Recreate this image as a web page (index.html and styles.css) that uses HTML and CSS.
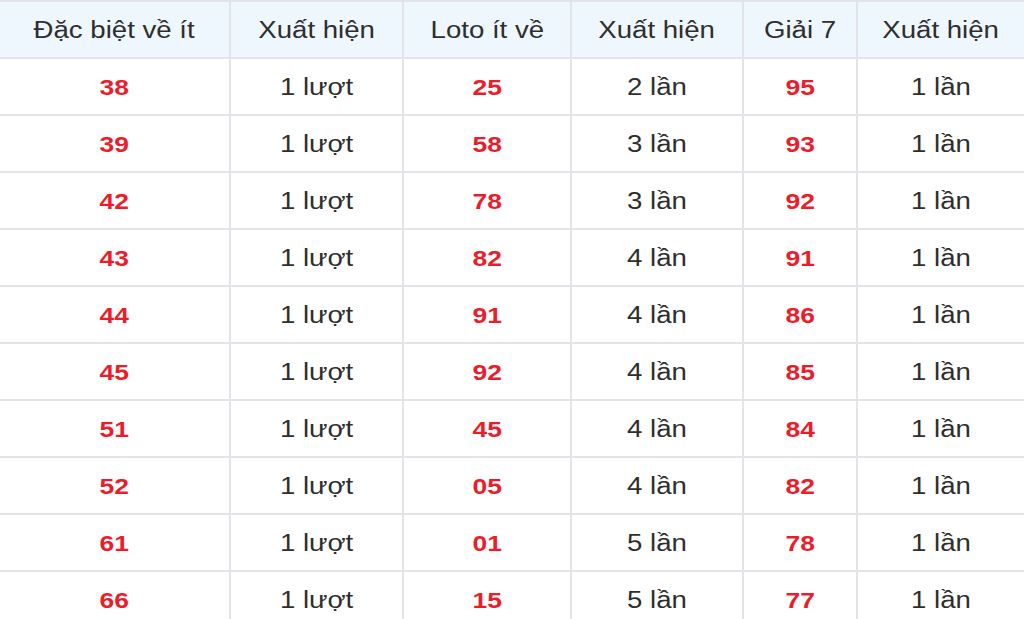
FILE: index.html
```html
<!DOCTYPE html>
<html lang="vi">
<head>
<meta charset="utf-8">
<link rel="stylesheet" href="styles.css">
</head>
<body>
<table class="stats">
  <colgroup>
    <col class="c1"><col class="c2"><col class="c3"><col class="c4"><col class="c5"><col class="c6">
  </colgroup>
  <thead>
    <tr>
      <th><span>Đặc biệt về ít</span></th>
      <th><span>Xuất hiện</span></th>
      <th><span>Loto ít về</span></th>
      <th><span>Xuất hiện</span></th>
      <th><span>Giải 7</span></th>
      <th><span>Xuất hiện</span></th>
    </tr>
  </thead>
  <tbody>
    <tr><td class="num"><span>38</span></td><td><span>1 lượt</span></td><td class="num"><span>25</span></td><td><span>2 lần</span></td><td class="num"><span>95</span></td><td><span>1 lần</span></td></tr>
    <tr><td class="num"><span>39</span></td><td><span>1 lượt</span></td><td class="num"><span>58</span></td><td><span>3 lần</span></td><td class="num"><span>93</span></td><td><span>1 lần</span></td></tr>
    <tr><td class="num"><span>42</span></td><td><span>1 lượt</span></td><td class="num"><span>78</span></td><td><span>3 lần</span></td><td class="num"><span>92</span></td><td><span>1 lần</span></td></tr>
    <tr><td class="num"><span>43</span></td><td><span>1 lượt</span></td><td class="num"><span>82</span></td><td><span>4 lần</span></td><td class="num"><span>91</span></td><td><span>1 lần</span></td></tr>
    <tr><td class="num"><span>44</span></td><td><span>1 lượt</span></td><td class="num"><span>91</span></td><td><span>4 lần</span></td><td class="num"><span>86</span></td><td><span>1 lần</span></td></tr>
    <tr><td class="num"><span>45</span></td><td><span>1 lượt</span></td><td class="num"><span>92</span></td><td><span>4 lần</span></td><td class="num"><span>85</span></td><td><span>1 lần</span></td></tr>
    <tr><td class="num"><span>51</span></td><td><span>1 lượt</span></td><td class="num"><span>45</span></td><td><span>4 lần</span></td><td class="num"><span>84</span></td><td><span>1 lần</span></td></tr>
    <tr><td class="num"><span>52</span></td><td><span>1 lượt</span></td><td class="num"><span>05</span></td><td><span>4 lần</span></td><td class="num"><span>82</span></td><td><span>1 lần</span></td></tr>
    <tr><td class="num"><span>61</span></td><td><span>1 lượt</span></td><td class="num"><span>01</span></td><td><span>5 lần</span></td><td class="num"><span>78</span></td><td><span>1 lần</span></td></tr>
    <tr><td class="num"><span>66</span></td><td><span>1 lượt</span></td><td class="num"><span>15</span></td><td><span>5 lần</span></td><td class="num"><span>77</span></td><td><span>1 lần</span></td></tr>
  </tbody>
</table>
</body>
</html>
```

FILE: styles.css
```css
html, body {
  margin: 0;
  padding: 0;
  background: #ffffff;
  overflow: hidden;
}

.stats {
  border-collapse: collapse;
  table-layout: fixed;
  width: 1026px;
  margin: 0 0 0 -2px;
  font-family: "Liberation Sans", Arial, sans-serif;
  color: #2e2e2e;
}

.c1 { width: 231px; }
.c2 { width: 173px; }
.c3 { width: 168px; }
.c4 { width: 172px; }
.c5 { width: 114px; }
.c6 { width: 168px; }

.stats th,
.stats td {
  border: 2px solid #e2e4e9;
  text-align: center;
  vertical-align: middle;
  padding: 2px 0 0 0;
  height: 53px;
  font-size: 23px;
  line-height: 1;
}

.stats thead th {
  background: #eef6fe;
  font-weight: normal;
  color: #2e2e2e;
}

.stats span {
  display: inline-block;
  transform: scaleX(1.2);
  transform-origin: center;
  white-space: nowrap;
}

.stats td.num {
  color: #ec1c2a;
  font-weight: bold;
  font-size: 22px;
}
```
